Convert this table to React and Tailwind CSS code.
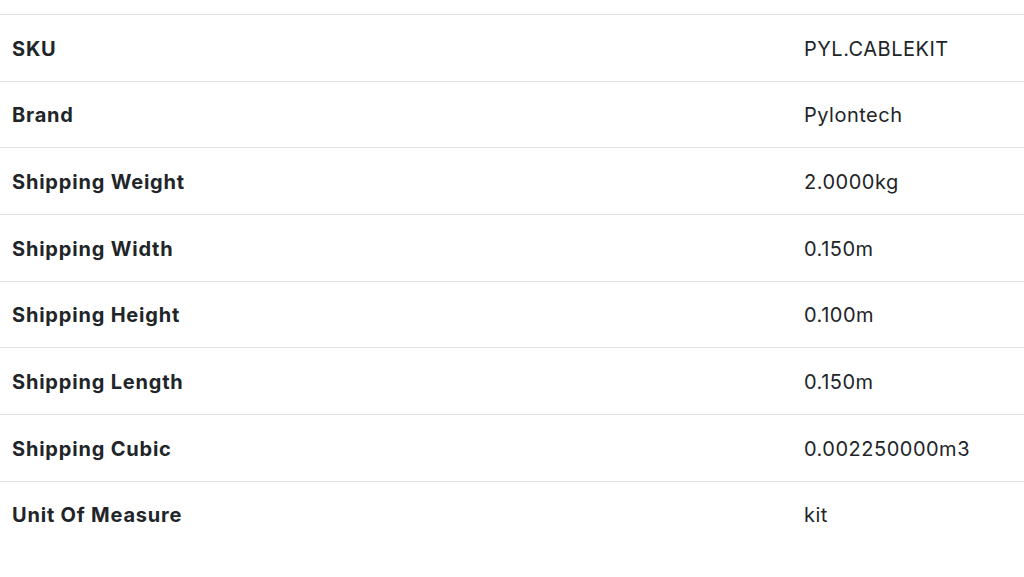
export default function App() {
  const rows = [
    ["SKU", "PYL.CABLEKIT"],
    ["Brand", "Pylontech"],
    ["Shipping Weight", "2.0000kg"],
    ["Shipping Width", "0.150m"],
    ["Shipping Height", "0.100m"],
    ["Shipping Length", "0.150m"],
    ["Shipping Cubic", "0.002250000m3"],
    ["Unit Of Measure", "kit"],
  ];
  return (
    <div className="w-[1024px] h-[577px] bg-white pt-[14px] text-[#212529]" style={{ fontFamily: "Inter, 'Noto Sans', sans-serif" }}>
      {rows.map(([k, v]) => (
        <div key={k} className="grid grid-cols-[792px_1fr] border-t border-[#dee2e6]">
          <div className="px-3 pt-[18.66px] pb-[17px] text-[20px] leading-[30px] font-bold tracking-[0.8px]">{k}</div>
          <div className="px-3 pt-[18.66px] pb-[17px] text-[20px] leading-[30px] tracking-[0.5px]">{v}</div>
        </div>
      ))}
    </div>
  );
}
